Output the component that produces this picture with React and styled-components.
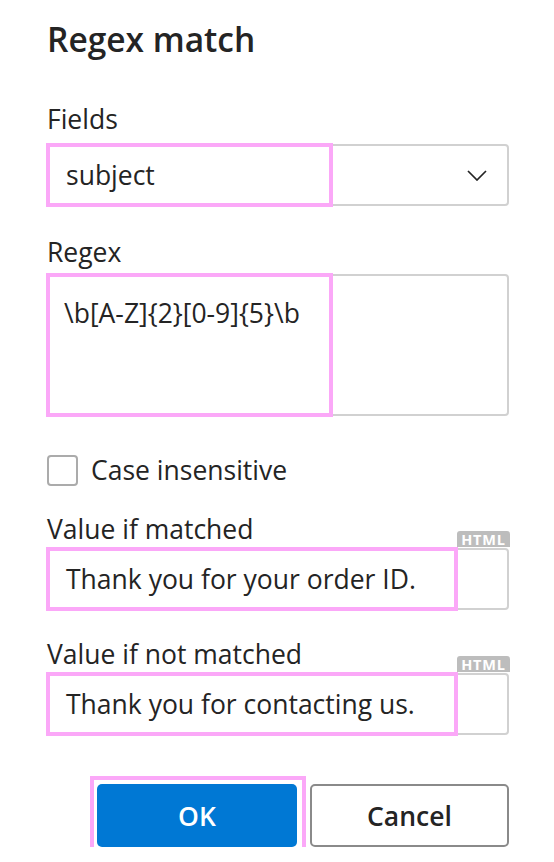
import React from 'react';
import styled, { createGlobalStyle } from 'styled-components';

const GlobalStyle = createGlobalStyle`
  html, body {
    margin: 0;
    padding: 0;
    background: #ffffff;
  }
  body {
    font-family: "Open Sans", "Noto Sans", sans-serif;
    color: #242424;
  }
`;

const Dialog = styled.div`
  width: 462px;
  padding: 19px 45px 0 47px;
  display: flex;
  flex-direction: column;
`;

const Title = styled.h1`
  margin: 0;
  font-size: 33.5px;
  line-height: 40px;
  font-weight: 600;
  color: #242424;
`;

const Label = styled.div`
  font-size: 26.5px;
  line-height: 32px;
  margin-top: ${(p) => p.$top}px;
  margin-bottom: ${(p) => p.$bottom}px;
`;

const Field = styled.div`
  position: relative;
  box-sizing: border-box;
  height: ${(p) => p.$height}px;
  border: 2px solid #d1d1d1;
  border-radius: 4px;
  background: #fff;
  display: flex;
  align-items: ${(p) => (p.$multiline ? 'flex-start' : 'center')};
  justify-content: space-between;
  padding: ${(p) => (p.$multiline ? '21px 0 0 15px' : '0 20px 0 17px')};
  font-size: 26.5px;
  line-height: 32px;
`;

const Highlight = styled.div`
  position: absolute;
  top: -3px;
  left: -3px;
  bottom: -3px;
  width: ${(p) => p.$width}px;
  border: 4px solid #fba8f8;
  box-sizing: border-box;
  pointer-events: none;
`;

const CheckRow = styled.label`
  display: flex;
  align-items: center;
  gap: 13px;
  margin-top: 38px;
  font-size: 26.5px;
  line-height: 32px;
`;

const Box = styled.span`
  width: 31px;
  height: 31px;
  box-sizing: border-box;
  border: 2px solid #ababab;
  border-radius: 4px;
`;

const Badge = styled.span`
  position: absolute;
  right: -3px;
  top: -19px;
  width: 53px;
  height: 16px;
  background: #bdbdbd;
  color: #fff;
  border-radius: 3px 3px 0 0;
  font-family: "Open Sans", sans-serif;
  font-weight: 700;
  font-size: 14.5px;
  line-height: 17px;
  text-align: center;
  letter-spacing: 0.8px;
`;

const Buttons = styled.div`
  display: flex;
  justify-content: flex-end;
  gap: 13px;
  margin-top: 49px;
`;

const Button = styled.button`
  position: relative;
  width: ${(p) => p.$width}px;
  height: 63px;
  box-sizing: border-box;
  border-radius: 5px;
  font-family: "Open Sans", sans-serif;
  font-size: 26.5px;
  font-weight: 600;
  border: ${(p) => (p.$primary ? 'none' : '2px solid #8a8a8a')};
  background: ${(p) => (p.$primary ? '#0078d4' : '#ffffff')};
  color: ${(p) => (p.$primary ? '#ffffff' : '#242424')};
`;

const ButtonHighlight = styled.span`
  position: absolute;
  top: -8px;
  left: -7px;
  right: -9px;
  bottom: -9px;
  border: 4px solid #fba8f8;
`;

const Chevron = () => (
  <svg width="20" height="11" viewBox="0 0 20 11" fill="none">
    <path d="M1 1 L10 10 L19 1" stroke="#242424" strokeWidth="1.7" />
  </svg>
);

const App = () => (
  <>
    <GlobalStyle />
    <Dialog>
      <Title>Regex match</Title>

      <Label $top={44} $bottom={9}>Fields</Label>
      <Field $height={62}>
        <Highlight $width={287} />
        <span>subject</span>
        <Chevron />
      </Field>

      <Label $top={30} $bottom={6}>Regex</Label>
      <Field $height={142} $multiline>
        <Highlight $width={287} />
        <span>{'\\b[A-Z]{2}[0-9]{5}\\b'}</span>
      </Field>

      <CheckRow>
        <Box />
        Case insensitive
      </CheckRow>

      <Label $top={27} $bottom={3}>Value if matched</Label>
      <Field $height={62}>
        <Highlight $width={412} />
        <Badge>HTML</Badge>
        <span>Thank you for your order ID.</span>
      </Field>

      <Label $top={28} $bottom={3}>Value if not matched</Label>
      <Field $height={62}>
        <Highlight $width={412} />
        <Badge>HTML</Badge>
        <span>Thank you for contacting us.</span>
      </Field>

      <Buttons>
        <Button $primary $width={200}>
          <ButtonHighlight />
          OK
        </Button>
        <Button $width={199}>Cancel</Button>
      </Buttons>
    </Dialog>
  </>
);

export default App;
